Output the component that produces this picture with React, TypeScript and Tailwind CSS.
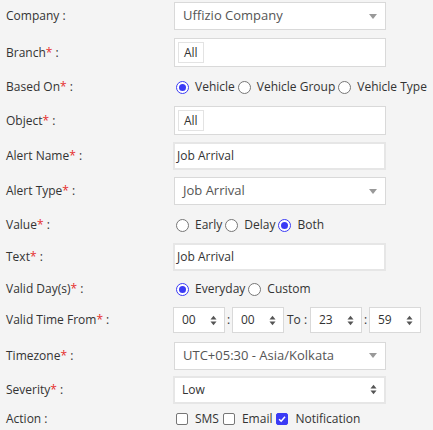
import React from "react";

const Req = () => <span className="text-[#e52d2d]">*</span>;

function Label({ text, req }: { text: string; req?: boolean }) {
  return (
    <div className="w-[167px] shrink-0 whitespace-nowrap pl-[6px] text-[12px] text-[#333]">
      {text}
      {req && <Req />}
      <span> :</span>
    </div>
  );
}

function Radio({ checked, label }: { checked?: boolean; label: string }) {
  return (
    <span className="flex items-center whitespace-nowrap">
      <span
        className={
          "mx-[3px] flex h-[13px] w-[13px] shrink-0 items-center justify-center rounded-full border bg-white " +
          (checked ? "border-[#3b3bf5]" : "border-[#767676]")
        }
      >
        {checked && <span className="h-[7px] w-[7px] rounded-full bg-[#3b3bf5]" />}
      </span>
      <span className="ml-[3px] text-[12px] text-[#333]">{label}</span>
    </span>
  );
}

function Check({ checked, label }: { checked?: boolean; label: string }) {
  return (
    <span className="flex items-center whitespace-nowrap">
      <span
        className={
          "mx-[3px] flex h-[12px] w-[12px] shrink-0 items-center justify-center rounded-[2px] border " +
          (checked ? "border-[#3b3bf5] bg-[#3b3bf5]" : "border-[#767676] bg-white")
        }
      >
        {checked && (
          <svg viewBox="0 0 12 12" className="h-[10px] w-[10px]">
            <path d="M2.5 6.2 L5 8.6 L9.6 3.2" fill="none" stroke="white" strokeWidth="1.8" />
          </svg>
        )}
      </span>
      <span className="ml-[4px] mr-[1px] text-[12px] text-[#333]">{label}</span>
    </span>
  );
}

function Caret() {
  return (
    <svg viewBox="0 0 8 5" className="h-[5px] w-[8px]">
      <path d="M0 0 L8 0 L4 5 Z" fill="#999" />
    </svg>
  );
}

function Spinner() {
  return (
    <svg viewBox="0 0 7 11" className="h-[11px] w-[7px]">
      <path d="M0.5 4.5 L3.5 0.8 L6.5 4.5 Z" fill="#555" />
      <path d="M0.5 6.5 L3.5 10.2 L6.5 6.5 Z" fill="#555" />
    </svg>
  );
}

function Select({ text }: { text: string }) {
  return (
    <div className="ml-[7px] flex h-[28px] w-[212px] items-center justify-between border border-[#d9d9d9] bg-white pl-[8px] pr-[8px] text-[13px] text-[#555]">
      <span>{text}</span>
      <Caret />
    </div>
  );
}

function ChipBox() {
  return (
    <div className="ml-[7px] flex h-[29px] w-[212px] items-center border border-[#d9d9d9] bg-white pl-[3px]">
      <span className="flex h-[21px] items-center border border-[#e3e3e3] px-[5px] text-[12px] text-[#333]">All</span>
    </div>
  );
}

function Input({ text }: { text: string }) {
  return (
    <div className="ml-[6px] flex h-[28px] w-[213px] items-center border-2 border-[#e6e6e6] bg-white pl-[2px] text-[12px] text-[#333]">
      {text}
    </div>
  );
}

function TimeBox({ v }: { v: string }) {
  return (
    <div className="flex h-[26px] w-[52px] items-center justify-between border border-[#d9d9d9] bg-white pl-[8px] pr-[7px] text-[12px] text-[#333]">
      <span>{v}</span>
      <Spinner />
    </div>
  );
}

export default function App() {
  return (
    <div
      className="h-[430px] w-[433px] overflow-hidden bg-[#f4f4f4]"
      style={{ fontFamily: '"Open Sans", "Noto Sans", sans-serif' }}
    >
      <div className="flex h-[32px] items-center">
        <Label text="Company" />
        <Select text="Uffizio Company" />
      </div>
      <div className="flex h-[41px] items-center">
        <Label text="Branch" req />
        <ChipBox />
      </div>
      <div className="flex h-[28px] items-center">
        <Label text="Based On" req />
        <div className="ml-[6px] flex items-center">
          <Radio checked label="Vehicle" />
          <Radio label="Vehicle Group" />
          <Radio label="Vehicle Type" />
        </div>
      </div>
      <div className="flex h-[39px] items-center">
        <Label text="Object" req />
        <ChipBox />
      </div>
      <div className="flex h-[32px] items-center">
        <Label text="Alert Name" req />
        <Input text="Job Arrival" />
      </div>
      <div className="flex h-[38px] items-center">
        <Label text="Alert Type" req />
        <Select text="Job Arrival" />
      </div>
      <div className="flex h-[30px] items-center">
        <Label text="Value" req />
        <div className="ml-[6px] flex items-center">
          <Radio label="Early" />
          <Radio label="Delay" />
          <Radio checked label="Both" />
        </div>
      </div>
      <div className="flex h-[33px] items-center">
        <Label text="Text" req />
        <Input text="Job Arrival" />
      </div>
      <div className="flex h-[32px] items-center">
        <Label text="Valid Day(s)" req />
        <div className="ml-[6px] flex items-center">
          <Radio checked label="Everyday" />
          <Radio label="Custom" />
        </div>
      </div>
      <div className="flex h-[30px] items-center">
        <Label text="Valid Time From" req />
        <div className="ml-[6px] flex items-center text-[12px] text-[#333]">
          <TimeBox v="00" />
          <span className="w-[7px] text-center">:</span>
          <TimeBox v="00" />
          <span className="w-[26px] text-center">To :</span>
          <TimeBox v="23" />
          <span className="w-[7px] text-center">:</span>
          <TimeBox v="59" />
        </div>
      </div>
      <div className="flex h-[41px] items-center">
        <Label text="Timezone" req />
        <Select text="UTC+05:30 - Asia/Kolkata" />
      </div>
      <div className="flex h-[27px] items-center">
        <Label text="Severity" req />
        <div className="ml-[6px] flex h-[28px] w-[213px] items-center justify-between border-2 border-[#e6e6e6] bg-white pl-[7px] pr-[7px] text-[12px] text-[#333]">
          <span>Low</span>
          <Spinner />
        </div>
      </div>
      <div className="flex h-[32px] items-center">
        <Label text="Action" />
        <div className="ml-[6px] flex items-center">
          <Check label="SMS" />
          <Check label="Email" />
          <Check checked label="Notification" />
        </div>
      </div>
    </div>
  );
}
